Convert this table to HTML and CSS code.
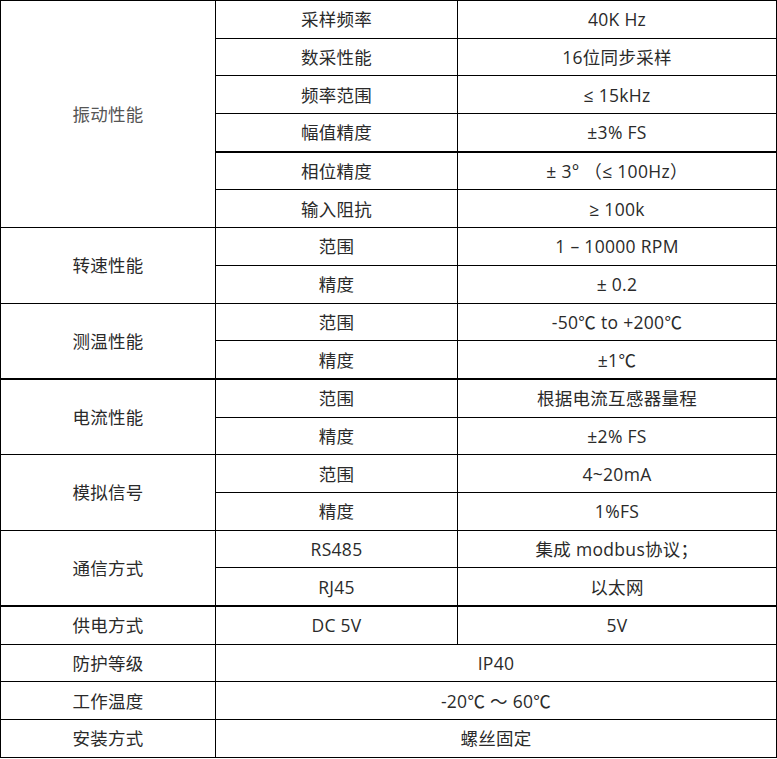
FILE: index.html
```html
<!DOCTYPE html>
<html lang="zh-CN">
<head>
<meta charset="utf-8">
<title>技术参数</title>
<link rel="stylesheet" href="styles.css">
</head>
<body>
<table class="spec">
  <colgroup>
    <col class="c1">
    <col class="c2">
    <col class="c3">
  </colgroup>
  <tbody>
    <tr><td rowspan="6" class="group light">振动性能</td><td>采样频率</td><td>40K Hz</td></tr>
    <tr><td>数采性能</td><td>16位同步采样</td></tr>
    <tr><td>频率范围</td><td>≤ 15kHz</td></tr>
    <tr class="thick"><td>幅值精度</td><td>±3% FS</td></tr>
    <tr><td>相位精度</td><td>± 3° （≤ 100Hz）</td></tr>
    <tr><td>输入阻抗</td><td>≥ 100k</td></tr>

    <tr><td rowspan="2" class="group">转速性能</td><td>范围</td><td>1 – 10000 RPM</td></tr>
    <tr><td>精度</td><td>± 0.2</td></tr>

    <tr><td rowspan="2" class="group thick-cell">测温性能</td><td>范围</td><td>-50℃ to +200℃</td></tr>
    <tr class="thick"><td>精度</td><td>±1℃</td></tr>

    <tr><td rowspan="2" class="group">电流性能</td><td>范围</td><td>根据电流互感器量程</td></tr>
    <tr><td>精度</td><td>±2% FS</td></tr>

    <tr><td rowspan="2" class="group">模拟信号</td><td>范围</td><td>4~20mA</td></tr>
    <tr><td>精度</td><td>1%FS</td></tr>

    <tr><td rowspan="2" class="group thick-cell">通信方式</td><td>RS485</td><td>集成 modbus协议；</td></tr>
    <tr class="thick"><td>RJ45</td><td>以太网</td></tr>

    <tr><td class="group">供电方式</td><td>DC 5V</td><td>5V</td></tr>
    <tr><td class="group">防护等级</td><td colspan="2">IP40</td></tr>
    <tr><td class="group">工作温度</td><td colspan="2">-20℃ ～ 60℃</td></tr>
    <tr><td class="group">安装方式</td><td colspan="2">螺丝固定</td></tr>
  </tbody>
</table>
</body>
</html>
```

FILE: styles.css
```css
html, body {
  margin: 0;
  padding: 0;
  background: #ffffff;
}

.spec {
  border-collapse: collapse;
  table-layout: fixed;
  width: 776px;
  font-family: "Open Sans", "Noto Sans CJK SC", sans-serif;
  font-size: 17.5px;
  letter-spacing: 0.3px;
  color: #2a2a2a;
}

.c1 { width: 215px; }
.c2 { width: 242px; }
.c3 { width: 319px; }

.spec td {
  border: 1px solid #000000;
  height: 36.7px;
  padding: 0;
  text-align: center;
  vertical-align: middle;
  line-height: 20px;
}

.spec .group.light {
  color: #555555;
}

.spec tr.thick td,
.spec td.thick-cell {
  border-bottom: 2px solid #000000;
}
```
